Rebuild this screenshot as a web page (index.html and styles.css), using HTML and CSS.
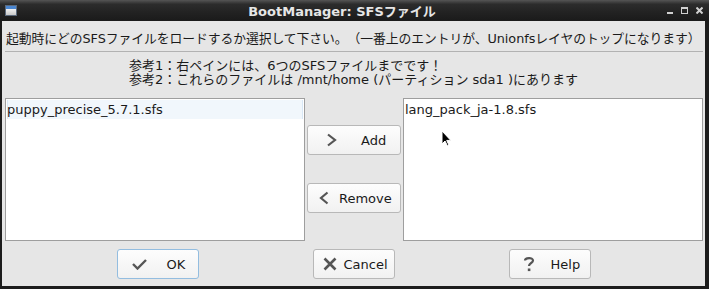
FILE: index.html
```html
<!DOCTYPE html>
<html lang="ja">
<head>
    <meta charset="UTF-8">
    <title>BootManager: SFSファイル</title>
    <link rel="stylesheet" href="styles.css">
</head>
<body>
    <div class="window">
        <div class="titlebar">
            <div class="app-icon"></div>
            <div class="title">BootManager: SFSファイル</div>
            <div class="controls">
                <span class="ctl-min"></span>
                <span class="ctl-max"></span>
                <svg class="ctl-close" width="7" height="7" viewBox="0 0 7 7">
                    <path d="M0.5 0.5 L6.5 6.5 M6.5 0.5 L0.5 6.5" stroke="#d0d0d0" stroke-width="2"/>
                </svg>
            </div>
        </div>

        <div class="content">
            <p class="intro">起動時にどのSFSファイルをロードするか選択して下さい。（一番上のエントリが、Unionfsレイヤのトップになります）</p>
            <div class="sep"></div>

            <div class="notes">
                <div>参考1：右ペインには、6つのSFSファイルまでです！</div>
                <div>参考2：これらのファイルは /mnt/home (パーティション sda1 )にあります</div>
            </div>

            <div class="panes">
                <ul class="list">
                    <li class="selected">puppy_precise_5.7.1.sfs</li>
                </ul>

                <div class="mover">
                    <button class="btn btn-add">
                        <svg width="11" height="14" viewBox="0 0 11 14"><path d="M2 1.5 L9 7 L2 12.5" fill="none" stroke="#555" stroke-width="2.2"/></svg>
                        <span>Add</span>
                    </button>
                    <button class="btn btn-remove">
                        <svg width="10" height="14" viewBox="0 0 10 14"><path d="M8.5 1.5 L2 7 L8.5 12.5" fill="none" stroke="#555" stroke-width="2.2"/></svg>
                        <span>Remove</span>
                    </button>
                </div>

                <ul class="list list-right">
                    <li>lang_pack_ja-1.8.sfs</li>
                    <svg class="cursor" width="11" height="17" viewBox="0 0 11 17">
                        <path d="M1 1 L1 14 L4 11 L6.5 16 L8 15.3 L5.7 10.4 L9.8 10.4 Z" fill="#000" stroke="#fff" stroke-width="1"/>
                    </svg>
                </ul>
            </div>

            <div class="actions">
                <button class="btn btn-ok">
                    <svg width="15" height="12" viewBox="0 0 15 12"><path d="M1 6 L5.5 10.5 L14 2" fill="none" stroke="#555" stroke-width="2.4"/></svg>
                    <span>OK</span>
                </button>
                <button class="btn btn-cancel">
                    <svg width="14" height="14" viewBox="0 0 14 14"><path d="M1.5 1.5 L12.5 12.5 M12.5 1.5 L1.5 12.5" stroke="#555" stroke-width="2.6"/></svg>
                    <span>Cancel</span>
                </button>
                <button class="btn btn-help">
                    <svg width="12" height="16" viewBox="0 0 12 16"><path d="M2 4.5 C2 1.5 10 1 10 4.5 C10 7 6 7 6 10" fill="none" stroke="#555" stroke-width="2.2"/><rect x="4.8" y="12.5" width="2.6" height="2.6" fill="#555"/></svg>
                    <span>Help</span>
                </button>
            </div>
        </div>
    </div>
</body>
</html>
```

FILE: styles.css
```css
* {
    box-sizing: border-box;
}

body {
    margin: 0;
    background-color: #1c1c1c;
    font-family: "DejaVu Sans", "Noto Sans CJK JP", sans-serif;
    font-size: 13px;
    color: #1a1a1a;
    text-spacing-trim: space-all;
}

.window {
    width: 709px;
    height: 289px;
    display: flex;
    flex-direction: column;
    border-left: 2px solid #1c1c1c;
    border-right: 4px solid #1c1c1c;
    border-bottom: 3px solid #1c1c1c;
    background-color: #e6e6e6;
}

/* title bar */
.titlebar {
    height: 21px;
    margin: 0 -4px 0 -2px;
    padding: 0 6px 0 5px;
    display: flex;
    align-items: center;
    background: linear-gradient(#555, #2c2c2c 20%, #222 60%, #1a1a1a);
    color: #e6e6e6;
}

.app-icon {
    width: 12px;
    height: 11px;
    border: 1px solid #5c6a7c;
    background: linear-gradient(#4a86d0 0, #4a86d0 3px, #f2f2f2 3px, #c9c9c9);
}

.title {
    flex: 1;
    text-align: center;
    font-weight: bold;
    font-size: 13px;
}

.controls {
    display: flex;
    align-items: center;
    gap: 8px;
}

.ctl-min {
    width: 6px;
    height: 2px;
    margin-top: 5px;
    background-color: #d0d0d0;
}

.ctl-max {
    width: 7px;
    height: 7px;
    border: 1px solid #d0d0d0;
    border-top-width: 2px;
}

/* body */
.content {
    flex: 1;
    padding: 0 0 0 3px;
}

.intro {
    margin: 0;
    padding: 7px 0 0 1px;
    height: 30px;
    white-space: nowrap;
    font-size: 12.8px;
    letter-spacing: -0.05px;
}

.sep {
    height: 1px;
    width: 698px;
    background-color: #b2b2b2;
}

.notes {
    padding: 7px 0 0 124px;
    line-height: 14px;
    height: 46px;
}

.panes {
    display: grid;
    grid-template-columns: 300px 94px 300px;
    gap: 2px;
    height: 143px;
}

.list {
    margin: 0;
    padding: 1px;
    list-style: none;
    background-color: #fff;
    border: 1px solid #9e9e9e;
}

.list li {
    height: 19px;
    line-height: 19px;
}

.list li.selected {
    background-color: #f1f7fc;
    box-shadow: inset 1px 0 #d9e8f6, inset -1px 0 #d9e8f6;
}

.list-right {
    position: relative;
}

.cursor {
    position: absolute;
    left: 37px;
    top: 31px;
}

.mover {
    display: flex;
    flex-direction: column;
    padding-top: 27px;
    gap: 28px;
}

/* buttons */
.btn {
    height: 30px;
    display: flex;
    align-items: center;
    border: 1px solid #b8b8b8;
    border-radius: 3px;
    background: linear-gradient(#fdfdfd, #f1f1f1);
    font-family: inherit;
    font-size: 13px;
    color: #1a1a1a;
    padding: 0;
}

.btn-add {
    padding-left: 18px;
    gap: 24px;
}

.btn-remove {
    padding-left: 11px;
    gap: 10px;
}

.actions {
    display: flex;
    justify-content: center;
    gap: 114px;
    padding: 8px 3px 0 0;
}

.actions .btn {
    width: 82px;
}

.btn-ok {
    padding-left: 14px;
    gap: 20px;
    border-color: #93bde0;
}

.btn-cancel {
    padding-left: 9px;
    gap: 7px;
}

.btn-help {
    padding-left: 13px;
    gap: 16px;
}
```
